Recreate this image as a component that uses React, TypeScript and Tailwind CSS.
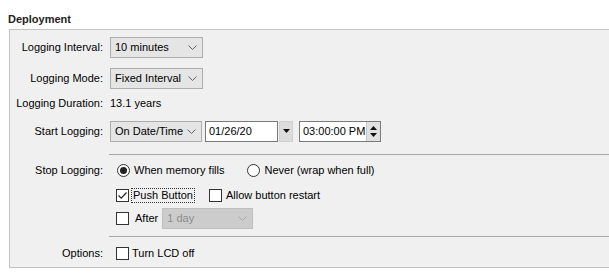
import React from 'react';

const Chevron: React.FC<{ color?: string }> = ({ color = '#606060' }) => (
  <svg width="9" height="5" viewBox="0 0 9 5" className="shrink-0">
    <path d="M0.5 0.5 L4.5 4.5 L8.5 0.5" fill="none" stroke={color} strokeWidth="1" />
  </svg>
);

const Combo: React.FC<{ value: string; width: string; disabled?: boolean }> = ({ value, width, disabled }) => (
  <div
    className={`${width} h-[21px] flex items-center justify-between pl-[4px] pr-[5px] border shrink-0 ${
      disabled ? 'bg-[#cccccc] border-[#bfbfbf] text-[#8d8d8d]' : 'bg-[#e5e5e5] border-[#adadad] text-black'
    }`}
  >
    <span>{value}</span>
    <Chevron color={disabled ? '#a8a8a8' : '#606060'} />
  </div>
);

const CheckBox: React.FC<{ checked?: boolean }> = ({ checked }) => (
  <div className="w-[13px] h-[13px] border border-[#333333] bg-white flex items-center justify-center shrink-0">
    {checked && (
      <svg width="11" height="11" viewBox="0 0 11 11">
        <path d="M1.5 5.5 L4.2 8.2 L9.5 2.5" fill="none" stroke="#222" strokeWidth="1.2" />
      </svg>
    )}
  </div>
);

const Radio: React.FC<{ checked?: boolean }> = ({ checked }) => (
  <div className="w-[13px] h-[13px] rounded-full border border-[#333333] bg-white flex items-center justify-center shrink-0">
    {checked && <div className="w-[7px] h-[7px] rounded-full bg-[#222]" />}
  </div>
);

const Label: React.FC<{ children: React.ReactNode }> = ({ children }) => (
  <div className="w-[94px] text-right pr-[1px] shrink-0 whitespace-nowrap">{children}</div>
);

export default function App() {
  return (
    <div
      className="w-[609px] h-[277px] bg-white text-[11px] text-black overflow-hidden whitespace-nowrap"
      style={{ fontFamily: '"Liberation Sans", Arial, sans-serif' }}
    >
      <div className="pl-[8px] pt-[11px] h-[29px] font-bold text-[#222]">Deployment</div>
      <div className="ml-[9px] border-t border-b border-l border-[#c3c3c3] bg-[#f0f0f0] pt-[6px] pb-[6px]">
        <div className="flex items-center h-[22px] gap-[6px]">
          <Label>Logging Interval:</Label>
          <Combo value="10 minutes" width="w-[93px]" />
        </div>
        <div className="flex items-center h-[22px] gap-[6px] mt-[9px]">
          <Label>Logging Mode:</Label>
          <Combo value="Fixed Interval" width="w-[93px]" />
        </div>
        <div className="flex items-center h-[16px] gap-[6px] mt-[6px]">
          <Label>Logging Duration:</Label>
          <span>13.1 years</span>
        </div>
        <div className="flex items-center h-[22px] gap-[6px] mt-[9px]">
          <Label>Start Logging:</Label>
          <Combo value="On Date/Time" width="w-[92px]" />
          <div className="flex items-center ml-[-3px]">
            <div className="w-[73px] h-[21px] bg-white border border-[#7a7a7a] flex items-center pl-[3px]">01/26/20</div>
            <div className="w-[14px] h-[21px] ml-[1px] bg-[#dcdcdc] border border-[#d0d0d0] flex items-center justify-center">
              <svg width="7" height="4" viewBox="0 0 7 4">
                <path d="M0 0 H7 L3.5 4 Z" fill="#111" />
              </svg>
            </div>
            <div className="w-[82px] h-[21px] ml-[6px] bg-white border border-[#7a7a7a] flex items-center justify-between pl-[3px]">
              <span>03:00:00 PM</span>
              <div className="w-[14px] h-[19px] bg-[#e1e1e1] border-l border-[#c8c8c8] flex flex-col items-center justify-center gap-[3px]">
                <svg width="7" height="4" viewBox="0 0 7 4">
                  <path d="M0 4 H7 L3.5 0 Z" fill="#111" />
                </svg>
                <svg width="7" height="4" viewBox="0 0 7 4">
                  <path d="M0 0 H7 L3.5 4 Z" fill="#111" />
                </svg>
              </div>
            </div>
          </div>
        </div>
        <div className="ml-[99px] mt-[12px] h-px bg-[#a8a8a8]" />
        <div className="flex h-[16px] items-center gap-[6px] mt-[7px]">
          <Label>Stop Logging:</Label>
          <div className="flex items-center pl-[7px]">
            <Radio checked />
            <span className="ml-[4px]">When memory fills</span>
            <div className="ml-[23px]">
              <Radio />
            </div>
            <span className="ml-[4px]">Never (wrap when full)</span>
          </div>
        </div>
        <div className="flex h-[16px] items-center mt-[9px] pl-[106px]">
          <CheckBox checked />
          <span className="ml-[2px] px-[1px] border border-dotted border-[#333] leading-[13px]">Push Button</span>
          <div className="ml-[14px]">
            <CheckBox />
          </div>
          <span className="ml-[4px]">Allow button restart</span>
        </div>
        <div className="flex h-[20px] items-center mt-[5px] pl-[106px]">
          <CheckBox />
          <span className="ml-[6px] mr-[4px]">After</span>
          <Combo value="1 day" width="w-[91px]" disabled />
        </div>
        <div className="ml-[99px] mt-[8px] h-px bg-[#a8a8a8]" />
        <div className="flex h-[16px] items-center gap-[6px] mt-[8px]">
          <Label>Options:</Label>
          <div className="flex items-center pl-[6px]">
            <CheckBox />
            <span className="ml-[3px]">Turn LCD off</span>
          </div>
        </div>
      </div>
    </div>
  );
}
